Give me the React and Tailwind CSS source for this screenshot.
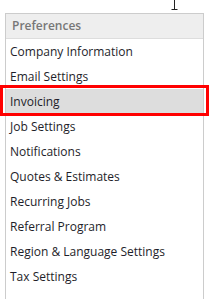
const ITEMS = [
  'Company Information',
  'Email Settings',
  'Invoicing',
  'Job Settings',
  'Notifications',
  'Quotes & Estimates',
  'Recurring Jobs',
  'Referral Program',
  'Region & Language Settings',
  'Tax Settings',
];

export default function App() {
  return (
    <div className="relative w-[209px] h-[299px] overflow-hidden bg-white" style={{ fontFamily: '"Open Sans", sans-serif' }}>
      {/* text cursor */}
      <svg className="absolute left-[170px] top-0" width="9" height="11" viewBox="0 0 9 11">
        <path d="M4.5 0V9.5M1.5 9.5H7.5" stroke="#222" strokeWidth="1" fill="none" />
      </svg>

      <div className="ml-[5px] mt-[13px] w-[199px] pb-[20px] border border-[#cccccc] bg-white">
        <div className="h-[25px] flex items-center px-[6px] bg-[#eeeeee] border-b border-[#dddddd] text-[12px] font-semibold text-[#777777]">
          Preferences
        </div>
        {ITEMS.map(item => (
          <div
            key={item}
            className={`relative h-[25px] flex items-center px-[4px] text-[12px] text-[#1e1e2a] ${item === 'Invoicing' ? 'bg-[#dddddd]' : ''}`}
          >
            {item}
            {item === 'Invoicing' && (
              <div className="absolute left-[-6px] right-[-6px] top-[-4px] bottom-[-2px] border-[3px] border-[#ff0000]" />
            )}
          </div>
        ))}
      </div>
    </div>
  );
}
